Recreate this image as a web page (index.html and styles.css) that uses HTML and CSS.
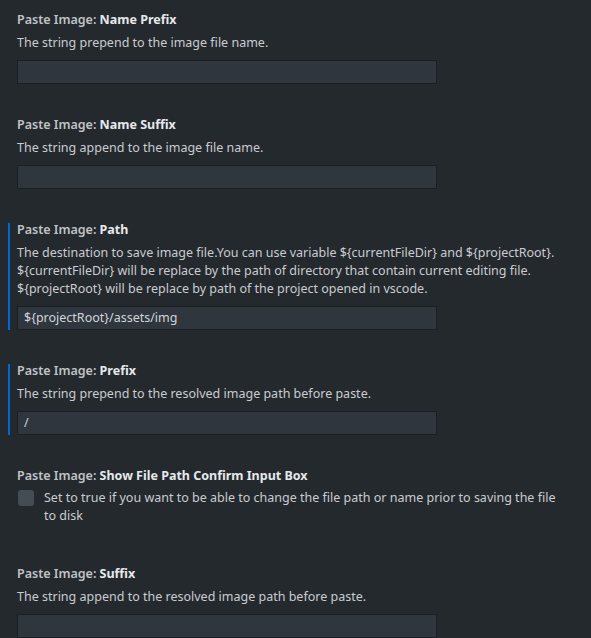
FILE: index.html
```html
<!DOCTYPE html>
<html>
<head>
<meta charset="utf-8">
<link rel="stylesheet" href="styles.css">
</head>
<body>
<div class="settings">
  <div class="item">
    <div class="inner">
      <div class="title"><span class="cat">Paste Image: </span><span class="name">Name Prefix</span></div>
      <div class="desc">The string prepend to the image file name.</div>
      <div class="input"></div>
    </div>
  </div>
  <div class="item">
    <div class="inner">
      <div class="title"><span class="cat">Paste Image: </span><span class="name">Name Suffix</span></div>
      <div class="desc">The string append to the image file name.</div>
      <div class="input"></div>
    </div>
  </div>
  <div class="item modified">
    <div class="inner">
      <div class="title"><span class="cat">Paste Image: </span><span class="name">Path</span></div>
      <div class="desc">The destination to save image file.You can use variable ${currentFileDir} and ${projectRoot}. ${currentFileDir} will be replace by the path of directory that contain current editing file. ${projectRoot} will be replace by path of the project opened in vscode.</div>
      <div class="input">${projectRoot}/assets/img</div>
    </div>
  </div>
  <div class="item modified">
    <div class="inner">
      <div class="title"><span class="cat">Paste Image: </span><span class="name">Prefix</span></div>
      <div class="desc">The string prepend to the resolved image path before paste.</div>
      <div class="input">/</div>
    </div>
  </div>
  <div class="item bool">
    <div class="inner">
      <div class="title"><span class="cat">Paste Image: </span><span class="name">Show File Path Confirm Input Box</span></div>
      <div class="check-row">
        <div class="checkbox"></div>
        <div class="check-desc">Set to true if you want to be able to change the file path or name prior to saving the file to disk</div>
      </div>
    </div>
  </div>
  <div class="item">
    <div class="inner">
      <div class="title"><span class="cat">Paste Image: </span><span class="name">Suffix</span></div>
      <div class="desc">The string append to the resolved image path before paste.</div>
      <div class="input"></div>
    </div>
  </div>
</div>
</body>
</html>
```
FILE: styles.css
```css
html, body {
  margin: 0;
  padding: 0;
  background: #24292e;
  height: 100%;
  overflow: hidden;
}
.settings {
  font-family: "Noto Sans", "Open Sans", sans-serif;
  font-size: 12.5px;
  line-height: 18px;
  padding-right: 26px;
}
.item {
  padding: 11px 0 21px 17px;
}
.item.bool {
  padding-bottom: 29px;
}
.inner {
  position: relative;
}
.modified .inner::before {
  content: "";
  position: absolute;
  left: -9px;
  top: 2px;
  bottom: 0;
  width: 2px;
  background: #0366d6;
}
.title {
  font-weight: 600;
  white-space: nowrap;
}
.cat {
  color: #c0c3c6;
}
.name {
  color: #e6e9ec;
  font-weight: 700;
}
.desc {
  margin-top: 5px;
  color: #c9ccd0;
}
.input {
  margin-top: 8px;
  width: 412px;
  height: 22px;
  line-height: 22px;
  background: #2f363d;
  border: 1px solid #1b1f23;
  color: #d1d5da;
  padding-left: 6px;
  box-sizing: content-box;
}
.check-row {
  display: flex;
  align-items: flex-start;
  margin-top: 4px;
}
.checkbox {
  flex: none;
  width: 16px;
  height: 16px;
  margin-top: 1px;
  margin-left: 1px;
  margin-right: 10px;
  border-radius: 3px;
  background: #444c56;
}
.check-desc {
  color: #c9ccd0;
}
```
